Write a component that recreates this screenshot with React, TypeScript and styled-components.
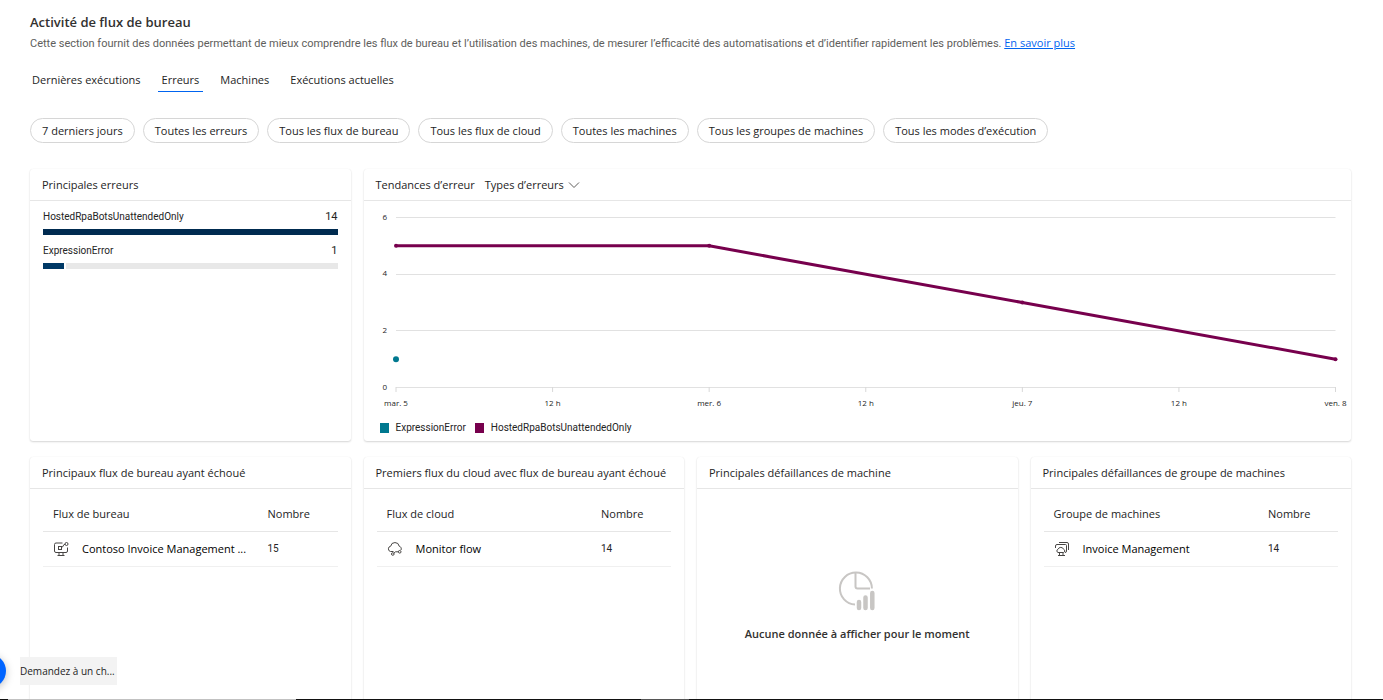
import React from "react";
import styled, { createGlobalStyle, css } from "styled-components";

const compactFont = `Roboto, "Open Sans", sans-serif`;

const GlobalStyle = createGlobalStyle`
  * { box-sizing: border-box; }
  body {
    margin: 0;
    background: #fff;
    color: #242424;
    font-family: "Open Sans", "Noto Sans", sans-serif;
    font-size: 11px;
    line-height: 16px;
    overflow: hidden;
  }
  button, input { font: inherit; color: inherit; }
`;

const Page = styled.main`
  display: flex;
  flex-direction: column;
  height: 100vh;
  padding: 12px 32px 0 30px;
`;

const Title = styled.h1`
  margin: 0;
  color: #323130;
  font-size: 13px;
  line-height: 20px;
  font-weight: 600;
`;

const Intro = styled.p`
  margin: 4px 0 0;
  color: #605e5c;
  font-family: ${compactFont};
`;

const IntroLink = styled.a`
  color: #0064f0;
  font-family: "Open Sans", sans-serif;
  font-weight: 500;
  line-height: 1;
  text-decoration: underline;
`;

const Tabs = styled.nav`
  display: flex;
  gap: 13px;
  margin-top: 16px;
  margin-left: -2px;
`;

const Tab = styled.button<{ $active?: boolean }>`
  height: 24px;
  padding: 0 4px;
  border: 0;
  border-bottom: 1px solid ${(p) => (p.$active ? "#0064f0" : "transparent")};
  background: none;
  cursor: pointer;
`;

const Filters = styled.div`
  display: flex;
  gap: 8px;
  margin-top: 26px;
`;

const Pill = styled.button`
  height: 25px;
  padding: 0 11px;
  border: 1px solid #d6d6d6;
  border-radius: 13px;
  background: #fff;
  white-space: nowrap;
  cursor: pointer;
`;

const Board = styled.div`
  flex: 1;
  display: grid;
  grid-template-columns: repeat(4, minmax(0, 1fr));
  grid-template-rows: auto 1fr;
  gap: 16px 13px;
  margin-top: 26px;
  min-height: 0;
`;

const Card = styled.section<{ $span?: number }>`
  grid-column: span ${(p) => p.$span ?? 1};
  display: flex;
  flex-direction: column;
  min-height: 272px;
  border-radius: 3px;
  background: #fff;
  box-shadow: 0 1px 2px rgba(0, 0, 0, 0.16), 0 0 1px rgba(0, 0, 0, 0.08);
`;

const CardHead = styled.header`
  display: flex;
  align-items: center;
  gap: 10px;
  height: 32px;
  padding: 0 12px;
  border-bottom: 1px solid #e6e6e6;
`;

const CardTitle = styled.h2`
  margin: 0;
  font: inherit;
  font-weight: 400;
  white-space: nowrap;
`;

const TypeButton = styled.button`
  display: flex;
  align-items: center;
  gap: 4px;
  padding: 0;
  border: 0;
  background: none;
  cursor: pointer;
`;

const ErrorList = styled.ul`
  display: flex;
  flex-direction: column;
  gap: 8px;
  margin: 0;
  padding: 8px 13px;
  list-style: none;
`;

const ErrorLabel = styled.div`
  display: flex;
  justify-content: space-between;
  font-family: ${compactFont};
  font-size: 10px;
`;

const ErrorCount = styled.span`
  font-size: 11px;
`;

const Meter = styled.div`
  display: flex;
  gap: 2px;
  height: 6px;
  margin-top: 4px;
`;

const MeterFill = styled.div<{ $color: string }>`
  background: ${(p) => p.$color};
`;

const MeterRest = styled.div`
  flex: 1;
  background: #e8e8e8;
`;

const Plot = styled.div`
  padding: 16px 16px 0 32px;
`;

const PlotSvg = styled.svg`
  display: block;
  width: 100%;
  height: 200px;
  overflow: visible;
  text { font-size: 8px; fill: #242424; }
`;

const Legend = styled.ul`
  display: flex;
  gap: 9px;
  margin: 3px 0 0;
  padding: 0 16px;
  list-style: none;
  font-family: ${compactFont};
  font-size: 10px;
`;

const LegendItem = styled.li`
  display: flex;
  align-items: center;
  gap: 7px;
`;

const Swatch = styled.span<{ $color: string }>`
  width: 9px;
  height: 10px;
  background: ${(p) => p.$color};
`;

const TableWrap = styled.div`
  padding: 8px 13px;
`;

const Table = styled.table`
  width: 100%;
  table-layout: fixed;
  border-collapse: collapse;
  text-align: left;
`;

const cell = css`
  padding: 0 0 0 10px;
`;

const HeadCell = styled.th<{ $narrow?: boolean }>`
  ${cell}
  height: 34px;
  width: ${(p) => (p.$narrow ? "80px" : "auto")};
  border-bottom: 1px solid #e6e6e6;
  font-weight: 400;
`;

const Cell = styled.td<{ $small?: boolean }>`
  ${cell}
  height: 35px;
  border-bottom: 1px solid #f0f0f0;
  ${(p) => p.$small && css`
    font-family: ${compactFont};
    font-size: 10px;
  `}
`;

const FlowName = styled.div`
  display: flex;
  align-items: center;
  gap: 13px;
  color: #000;
`;

const FlowLink = styled.a`
  color: inherit;
  text-decoration: none;
  white-space: nowrap;
`;

const Icon = styled.svg`
  flex: none;
  width: 16px;
  height: 16px;
  fill: none;
  stroke: #484644;
  stroke-width: 1;
`;

const Empty = styled.div`
  display: flex;
  flex-direction: column;
  align-items: center;
  gap: 15px;
  padding-top: 82px;
  color: #323130;
  font-weight: 600;
`;

const ChatBubble = styled.button`
  position: fixed;
  left: -28px;
  bottom: 12px;
  width: 34px;
  height: 34px;
  padding: 0;
  border: 0;
  border-radius: 50%;
  background: #0064ff;
  box-shadow: 0 2px 8px rgba(0, 0, 0, 0.25);
`;

const ChatPrompt = styled.button`
  position: fixed;
  left: 20px;
  bottom: 15px;
  width: 97px;
  height: 28px;
  padding: 0;
  border: 0;
  background: #f3f3f3;
  font-size: 10px;
  text-align: left;
`;

const BottomEdge = styled.div`
  position: fixed;
  left: 0;
  right: 0;
  bottom: 0;
  display: flex;
  gap: 345px;
  height: 1px;
  padding-left: 8px;
  background: #111;
`;

const EdgeSegment = styled.div<{ $width: number; $color: string }>`
  width: ${(p) => p.$width}px;
  background: ${(p) => p.$color};
`;

const filters = [
  "7 derniers jours",
  "Toutes les erreurs",
  "Tous les flux de bureau",
  "Tous les flux de cloud",
  "Toutes les machines",
  "Tous les groupes de machines",
  "Tous les modes d’exécution",
];

const PURPLE = "#77004d";
const TEAL = "#00788f";

const yOf = (v: number) => 170.5 - (v * 170) / 6;
const ticks = ["mar. 5", "12 h", "mer. 6", "12 h", "jeu. 7", "12 h", "ven. 8"];
const series = [
  { day: 0, value: 5 },
  { day: 1, value: 5 },
  { day: 2, value: 3 },
  { day: 3, value: 1 },
];
const pct = (n: number, of: number) => `${(n / of) * 100}%`;

function TrendChart() {
  return (
    <Plot>
      <PlotSvg role="img" aria-label="Tendances d’erreur">
        {[0, 2, 4, 6].map((v) => (
          <g key={v}>
            <line x1="0" x2="100%" y1={Math.floor(yOf(v)) + 0.5} y2={Math.floor(yOf(v)) + 0.5} stroke="#e1e1e1" />
            <text x="-9" y={yOf(v) + 2} textAnchor="end">{v}</text>
          </g>
        ))}
        {ticks.map((t, i) => (
          <g key={i}>
            <line x1={pct(i, 6)} x2={pct(i, 6)} y1="170" y2="175" stroke="#d8d8d8" />
            <text x={pct(i, 6)} y="189" textAnchor="middle">{t}</text>
          </g>
        ))}
        {series.slice(1).map((p, i) => (
          <line
            key={p.day}
            x1={pct(series[i].day, 3)}
            y1={yOf(series[i].value)}
            x2={pct(p.day, 3)}
            y2={yOf(p.value)}
            stroke={PURPLE}
            strokeWidth="3"
          />
        ))}
        {series.map((p) => (
          <circle key={p.day} cx={pct(p.day, 3)} cy={yOf(p.value)} r="2" fill={PURPLE} />
        ))}
        <circle cx="0" cy={yOf(1)} r="3" fill={TEAL} />
      </PlotSvg>
    </Plot>
  );
}

const DesktopFlowIcon = () => (
  <Icon viewBox="0 0 16 16" aria-hidden="true">
    <path d="M9.500 2H3a1.500 1.500 0 0 0-1.500 1.500v6.500A1.500 1.500 0 0 0 3 11.500h10a1.500 1.500 0 0 0 1.500-1.500V6.500M6 11.500v2.500M10 11.500v2.500M4.500 14.500h7" />
    <rect x="5.500" y="5.500" width="3" height="3" />
    <path d="M8.500 6.500l1-.5 1.500-2.500h1" />
    <circle cx="13.500" cy="3" r="1.500" />
  </Icon>
);

const CloudFlowIcon = () => (
  <Icon viewBox="0 0 16 16" aria-hidden="true">
    <path d="M3.500 10.500A2.700 2.700 0 0 1 3.700 5.200 4.300 4.300 0 0 1 12.200 5.200 2.700 2.700 0 0 1 14 9M3.500 10.500H6.500" />
    <circle cx="5.800" cy="13" r="1.300" />
    <circle cx="12.700" cy="10.800" r="1.300" />
    <path d="M6.800 12.200L8.500 10.800H11.400" />
  </Icon>
);

const MachineGroupIcon = () => (
  <Icon viewBox="0 0 16 16" aria-hidden="true">
    <path d="M5 1.500h8a1.500 1.500 0 0 1 1.500 1.500v6M3 3.500h8.500A1 1 0 0 1 12.500 4.500v5.500a1.500 1.500 0 0 1-1.500 1.500M1.500 7V5A1.500 1.500 0 0 1 3 3.500M5.500 11.500v2.500M9 11.500v2.500M4 14.500h7" />
    <path d="M4 11.500a1.700 1.700 0 0 1 0-3.200 3 3 0 0 1 5.600 0 1.700 1.700 0 0 1 0 3.200z" />
  </Icon>
);

const EmptyChartIcon = () => (
  <svg width="38" height="40" viewBox="0 0 38 40" fill="none" stroke="#c8c6c4" strokeWidth="2" aria-hidden="true">
    <path d="M17 33.500A16 16 0 1 1 33.900 17.500" />
    <path d="M17.500 2v13.500a2 2 0 0 0 2 2H32" />
    <path d="M21 31v6M27.500 26.500v10.500M34.300 22v15" strokeWidth="4.500" strokeLinecap="round" />
  </svg>
);

interface FlowCardProps {
  title: string;
  column: string;
  name: string;
  count: number;
  icon: React.ReactNode;
}

function FlowCard({ title, column, name, count, icon }: FlowCardProps) {
  return (
    <Card>
      <CardHead><CardTitle>{title}</CardTitle></CardHead>
      <TableWrap>
        <Table>
          <thead>
            <tr>
              <HeadCell scope="col">{column}</HeadCell>
              <HeadCell scope="col" $narrow>Nombre</HeadCell>
            </tr>
          </thead>
          <tbody>
            <tr>
              <Cell><FlowName>{icon}<FlowLink href="#">{name}</FlowLink></FlowName></Cell>
              <Cell $small>{count}</Cell>
            </tr>
          </tbody>
        </Table>
      </TableWrap>
    </Card>
  );
}

export default function App() {
  return (
    <>
      <GlobalStyle />
      <Page>
        <Title>Activité de flux de bureau</Title>
        <Intro>
          Cette section fournit des données permettant de mieux comprendre les flux de bureau et l’utilisation des machines, de mesurer l’efficacité des automatisations et d’identifier rapidement les problèmes.{" "}
          <IntroLink href="#">En savoir plus</IntroLink>
        </Intro>
        <Tabs>
          <Tab>Dernières exécutions</Tab>
          <Tab $active aria-current="page">Erreurs</Tab>
          <Tab>Machines</Tab>
          <Tab>Exécutions actuelles</Tab>
        </Tabs>
        <Filters>
          {filters.map((f) => <Pill key={f}>{f}</Pill>)}
        </Filters>
        <Board>
          <Card>
            <CardHead><CardTitle>Principales erreurs</CardTitle></CardHead>
            <ErrorList>
              <li>
                <ErrorLabel>HostedRpaBotsUnattendedOnly<ErrorCount>14</ErrorCount></ErrorLabel>
                <Meter><MeterFill $color="#002b50" style={{ width: "100%" }} /></Meter>
              </li>
              <li>
                <ErrorLabel>ExpressionError<ErrorCount>1</ErrorCount></ErrorLabel>
                <Meter><MeterFill $color="#003966" style={{ width: "7.1%" }} /><MeterRest /></Meter>
              </li>
            </ErrorList>
          </Card>
          <Card $span={3}>
            <CardHead>
              <CardTitle>Tendances d’erreur</CardTitle>
              <TypeButton>
                Types d’erreurs
                <svg width="12" height="8" viewBox="0 0 12 8" fill="none" stroke="#605e5c" aria-hidden="true"><path d="M1 1.500l5 5 5-5" /></svg>
              </TypeButton>
            </CardHead>
            <TrendChart />
            <Legend>
              <LegendItem><Swatch $color={TEAL} />ExpressionError</LegendItem>
              <LegendItem><Swatch $color={PURPLE} />HostedRpaBotsUnattendedOnly</LegendItem>
            </Legend>
          </Card>
          <FlowCard title="Principaux flux de bureau ayant échoué" column="Flux de bureau" name="Contoso Invoice Management ..." count={15} icon={<DesktopFlowIcon />} />
          <FlowCard title="Premiers flux du cloud avec flux de bureau ayant échoué" column="Flux de cloud" name="Monitor flow" count={14} icon={<CloudFlowIcon />} />
          <Card>
            <CardHead><CardTitle>Principales défaillances de machine</CardTitle></CardHead>
            <Empty><EmptyChartIcon />Aucune donnée à afficher pour le moment</Empty>
          </Card>
          <FlowCard title="Principales défaillances de groupe de machines" column="Groupe de machines" name="Invoice Management" count={14} icon={<MachineGroupIcon />} />
        </Board>
      </Page>
      <ChatBubble aria-label="Discussion" />
      <ChatPrompt>Demandez à un ch...</ChatPrompt>
      <BottomEdge>
        <EdgeSegment $width={288} $color="#c1c1c1" />
        <EdgeSegment $width={48} $color="#555" />
      </BottomEdge>
    </>
  );
}
